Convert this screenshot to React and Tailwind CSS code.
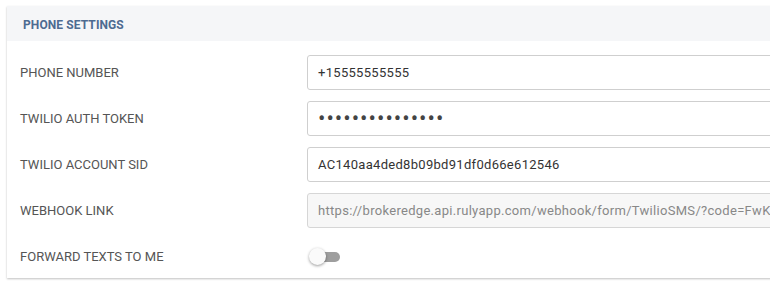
export default function App() {
  const rows = [
    { label: "PHONE NUMBER", value: "+15555555555" },
    { label: "TWILIO AUTH TOKEN", value: "•••••••••••••••", secret: true },
    { label: "TWILIO ACCOUNT SID", value: "AC140aa4ded8b09bd91df0d66e612546" },
    {
      label: "WEBHOOK LINK",
      value: "https://brokeredge.api.rulyapp.com/webhook/form/TwilioSMS/?code=FwKq8XbE2vYtR",
      readOnly: true,
    },
  ];

  return (
    <div className="w-[770px] h-[286px] overflow-hidden bg-white font-['Roboto',sans-serif]">
      <div className="ml-[7px] mt-[6px] w-[820px] bg-white shadow-[0_1px_2px_rgba(0,0,0,0.25)]">
        {/* HEADER */}
        <div className="h-[35px] bg-[#f5f6f8] flex items-center pl-[16px] pt-[3px]">
          <h2 className="text-[12px] font-bold text-[#4d6b91] tracking-[0.1px]">PHONE SETTINGS</h2>
        </div>

        {/* FIELDS */}
        <div className="pt-[14px] pb-[4px] pl-[13px] flex flex-col gap-[11px]">
          {rows.map((r) => (
            <div key={r.label} className="flex items-center h-[35px]">
              <label className="w-[287px] shrink-0 text-[13px] text-[#555]">{r.label}</label>
              <div
                className={
                  r.readOnly
                    ? "flex-1 h-[35px] rounded-[3px] border border-[#d6d6d6] bg-[#f7f7f7] flex items-center pl-[10px] text-[13px] text-[#888] whitespace-nowrap overflow-hidden tracking-[0.3px]"
                    : "flex-1 h-[35px] rounded-[3px] border border-[#cfcfcf] bg-white flex items-center pl-[10px] text-[13px] text-[#333] whitespace-nowrap overflow-hidden tracking-[0.3px]"
                }
              >
                {r.secret ? (
                  <span className="text-[#444] text-[22px] leading-none tracking-[1px]">{r.value}</span>
                ) : (
                  r.value
                )}
              </div>
            </div>
          ))}

          {/* TOGGLE */}
          <div className="flex items-center h-[35px]">
            <label className="w-[287px] shrink-0 text-[13px] text-[#555]">FORWARD TEXTS TO ME</label>
            <div className="relative ml-[2px] w-[32px] h-[17px] flex items-center">
              <div className="ml-[3px] w-[28px] h-[10px] rounded-full bg-[#9e9e9e]" />
              <div className="absolute left-0 top-0 w-[17px] h-[17px] rounded-full bg-[#fafafa] shadow-[0_1px_3px_rgba(0,0,0,0.4)]" />
            </div>
          </div>
        </div>
      </div>
    </div>
  );
}
